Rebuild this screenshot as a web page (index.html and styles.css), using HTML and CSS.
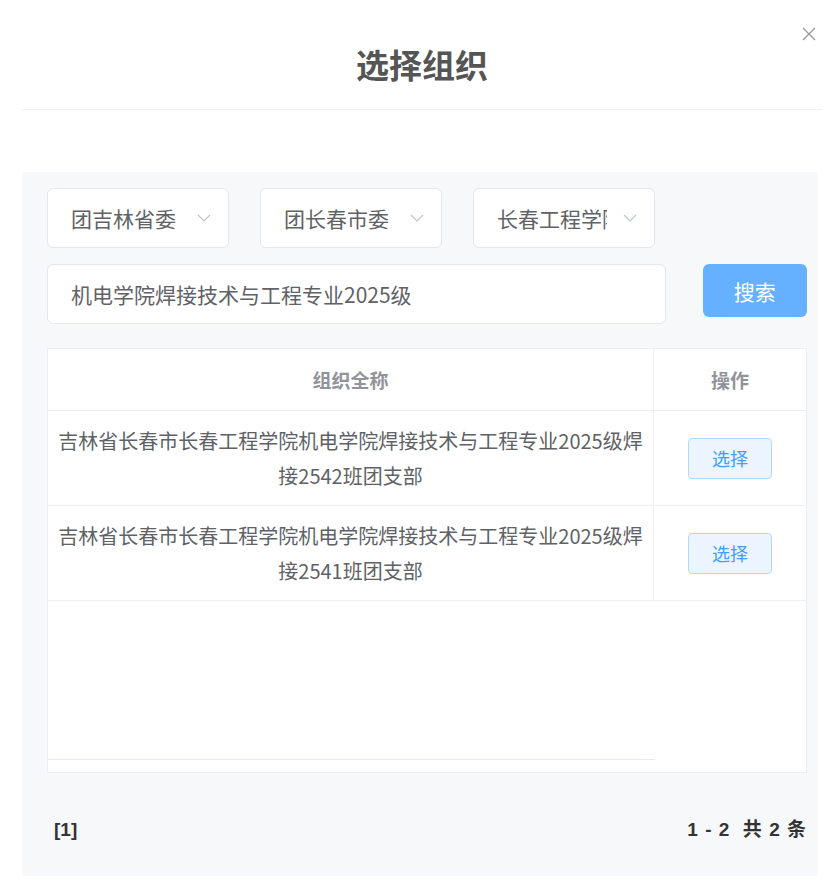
FILE: index.html
```html
<!DOCTYPE html>
<html>
<head>
  <meta charset="utf-8">
  <title>选择组织</title>
  <link rel="stylesheet" href="styles.css">
</head>

<body>
  <div class="dialog">
    <div class="dialog-header">
      <p class="dialog-title">选择组织</p>
      <span class="close-button">
        <svg width="14" height="14" viewBox="0 0 14 14"><path d="M1 1 L13 13 M13 1 L1 13" stroke="#9a9a9a" stroke-width="1.3" fill="none"/></svg>
      </span>
    </div>

    <div class="panel">
      <div class="select-row">
        <div class="select-box">
          <span class="select-text">团吉林省委</span>
          <svg class="select-arrow" width="14" height="8" viewBox="0 0 14 8"><path d="M1 1 L7 7 L13 1" stroke="#c0c4cc" stroke-width="1.2" fill="none"/></svg>
        </div>
        <div class="select-box">
          <span class="select-text">团长春市委</span>
          <svg class="select-arrow" width="14" height="8" viewBox="0 0 14 8"><path d="M1 1 L7 7 L13 1" stroke="#c0c4cc" stroke-width="1.2" fill="none"/></svg>
        </div>
        <div class="select-box">
          <span class="select-text">长春工程学院</span>
          <svg class="select-arrow" width="14" height="8" viewBox="0 0 14 8"><path d="M1 1 L7 7 L13 1" stroke="#c0c4cc" stroke-width="1.2" fill="none"/></svg>
        </div>
      </div>

      <div class="search-row">
        <div class="search-input">机电学院焊接技术与工程专业2025级</div>
        <button class="search-button">搜索</button>
      </div>

      <div class="org-table">
        <div class="table-row table-head">
          <div class="cell cell-name">组织全称</div>
          <div class="cell cell-action">操作</div>
        </div>
        <div class="table-row">
          <div class="cell cell-name">吉林省长春市长春工程学院机电学院焊接技术与工程专业2025级焊接2542班团支部</div>
          <div class="cell cell-action"><button class="pick-button">选择</button></div>
        </div>
        <div class="table-row">
          <div class="cell cell-name">吉林省长春市长春工程学院机电学院焊接技术与工程专业2025级焊接2541班团支部</div>
          <div class="cell cell-action"><button class="pick-button">选择</button></div>
        </div>
        <div class="table-empty"></div>
        <div class="table-scroll"></div>
      </div>

      <div class="pager">
        <span>[1]</span>
        <span class="pager-total">1 - 2&nbsp; 共 2 条</span>
      </div>
    </div>
  </div>
</body>
</html>
```

FILE: styles.css
```css
body {
  background-color: #ffffff;
  margin: 0;
  padding: 0;
  font-family: "Noto Sans CJK SC", "Noto Sans", sans-serif;
}

.dialog {
  width: 830px;
}

.dialog-header {
  position: relative;
  height: 109px;
  margin: 0 8px 0 22px;
  border-bottom: 1px solid #f2f2f2;
  display: flex;
  justify-content: center;
  align-items: center;
}

.dialog-title {
  margin: 18px 0 0 0;
  font-size: 33px;
  font-weight: bold;
  color: #555555;
}

.close-button {
  position: absolute;
  top: 27px;
  right: 6px;
  line-height: 0;
}

.panel {
  background-color: #f7f8fa;
  margin: 62px 12px 8px 22px;
  padding: 16px 11px 34px 25px;
}

.select-row {
  display: flex;
  gap: 31px;
}

.select-box {
  width: 182px;
  height: 60px;
  box-sizing: border-box;
  background-color: #ffffff;
  border: 1px solid #e4e7ed;
  border-radius: 6px;
  display: flex;
  align-items: center;
  padding: 0 17px 0 23px;
  gap: 16px;
}

.select-text {
  flex: 1;
  overflow: hidden;
  white-space: nowrap;
  font-size: 21px;
  color: #606266;
}

.select-arrow {
  flex-shrink: 0;
}

.search-row {
  display: flex;
  gap: 37px;
  margin-top: 16px;
}

.search-input {
  width: 622px;
  height: 60px;
  box-sizing: border-box;
  background-color: #ffffff;
  border: 1px solid #e4e7ed;
  border-radius: 6px;
  padding: 0 23px;
  display: flex;
  align-items: center;
  font-size: 21px;
  color: #606266;
}

.search-button {
  width: 105px;
  height: 53px;
  background-color: #66b1ff;
  border: none;
  border-radius: 6px;
  color: #ffffff;
  font-family: "Noto Sans CJK SC", sans-serif;
  font-size: 21px;
}

.org-table {
  width: 760px;
  height: 425px;
  box-sizing: border-box;
  margin-top: 24px;
  background-color: #ffffff;
  border: 1px solid #ebeef5;
  display: flex;
  flex-direction: column;
}

.table-row {
  display: flex;
  border-bottom: 1px solid #ebeef5;
}

.cell {
  display: flex;
  align-items: center;
  justify-content: center;
  text-align: center;
}

.cell-name {
  width: 606px;
  box-sizing: border-box;
  border-right: 1px solid #ebeef5;
  padding: 12px 3px;
  font-size: 20px;
  line-height: 35px;
  color: #606266;
}

.cell-action {
  flex: 1;
}

.table-head {
  height: 61px;
}

.table-head .cell {
  font-size: 19px;
  font-weight: bold;
  color: #909399;
}

.pick-button {
  width: 84px;
  height: 41px;
  background-color: #ecf5ff;
  border: 1px solid #b3d8ff;
  border-radius: 4px;
  color: #409eff;
  font-family: "Noto Sans CJK SC", sans-serif;
  font-size: 18px;
}

.table-empty {
  flex: 1;
}

.table-scroll {
  width: 607px;
  height: 12px;
  border-top: 1px solid #e6ebf3;
}

.pager {
  display: flex;
  justify-content: space-between;
  padding: 0 0 0 7px;
  margin-top: 45px;
  font-family: "Liberation Sans", "Noto Sans CJK SC", sans-serif;
  font-size: 19px;
  font-weight: bold;
  line-height: 24px;
  color: #333333;
}

.pager-total {
  letter-spacing: 1px;
}
```
